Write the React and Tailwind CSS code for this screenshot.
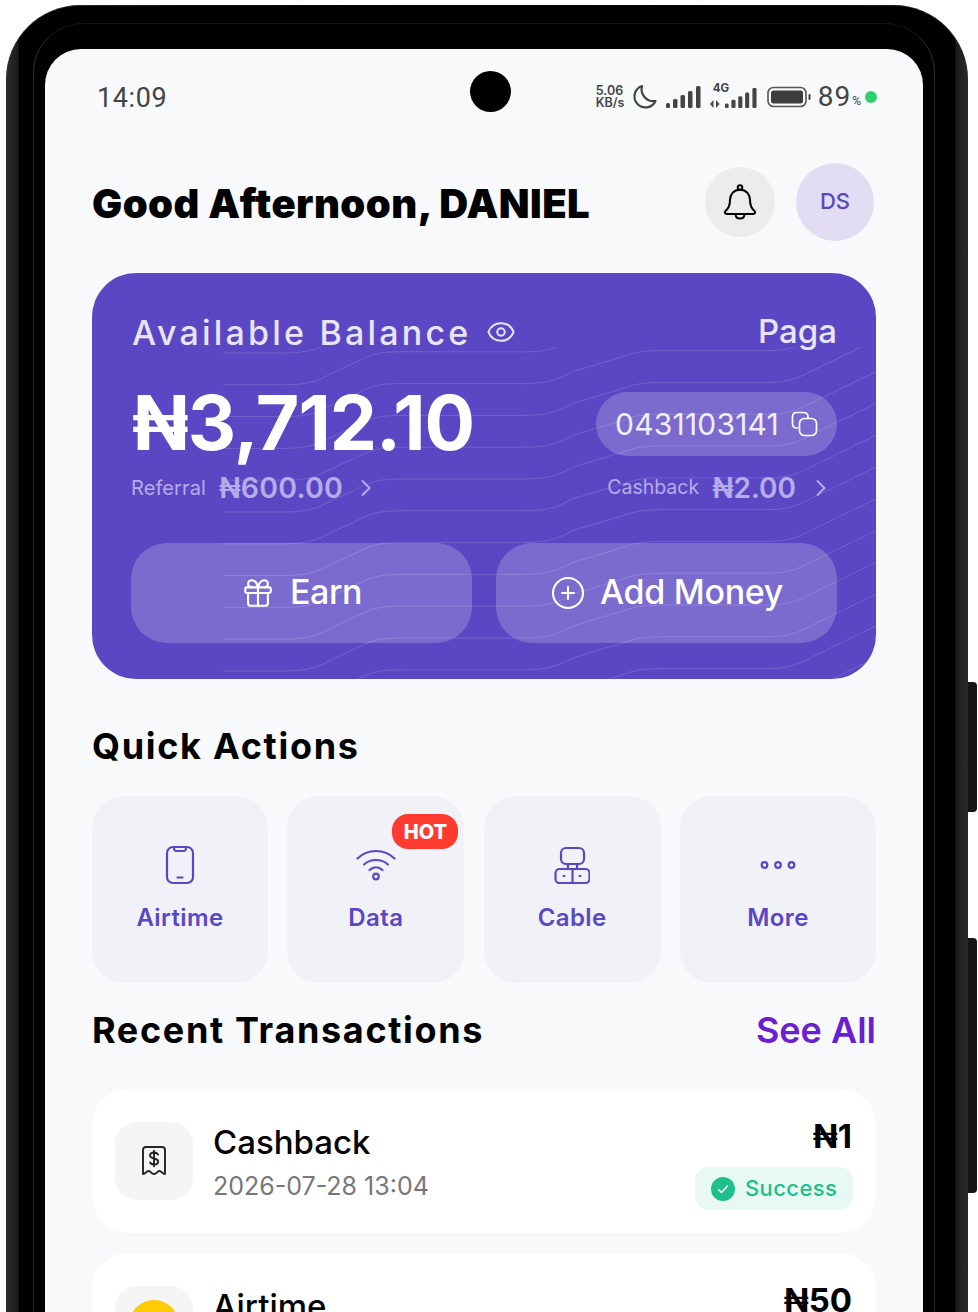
import { ChevronRight, CirclePlus, Eye, Gift } from "lucide-react";

const waveOffsets = Array.from({ length: 15 }, (_, i) => 6 + i * 31.8);

function Waves() {
  return (
    <svg
      className="absolute left-[131px] top-[74px] pointer-events-none"
      width="653"
      height="332"
      viewBox="0 0 653 332"
      fill="none"
    >
      {waveOffsets.map((y) => (
        <path
          key={y}
          d={`M0 ${y} H60 C85 ${y} 95 ${y - 4} 110 ${y - 12} L140 ${y - 26} C152 ${y - 32} 162 ${y - 33} 180 ${y - 33} H300 C325 ${y - 33} 335 ${y - 37} 350 ${y - 45} L400 ${y - 60} C412 ${y - 65} 425 ${y - 66} 440 ${y - 66} H545 C565 ${y - 66} 575 ${y - 70} 590 ${y - 78} L660 ${y - 112}`}
          stroke="white"
          strokeOpacity="0.15"
          strokeWidth="1"
        />
      ))}
    </svg>
  );
}

function SignalBars({ className = "" }) {
  return (
    <svg className={className} width="35" height="23" viewBox="0 0 35 23" fill="#444">
      <rect x="0" y="17" width="4" height="5" rx="1.5" />
      <rect x="7" y="13" width="4.5" height="9" rx="1.5" />
      <rect x="14.5" y="9" width="4.5" height="13" rx="1.5" />
      <rect x="22" y="5" width="4.5" height="17" rx="1.5" />
      <rect x="30" y="0" width="4.5" height="22" rx="1.5" />
    </svg>
  );
}

function StatusBar() {
  return (
    <div className="relative flex h-[96px] items-center justify-between pl-[5px] text-[#444]">
      <span className="pt-[3px] font-['Roboto',sans-serif] text-[27px] tracking-[0.6px]">14:09</span>
      <div className="absolute left-[378px] top-[22px] h-[41px] w-[41px] rounded-full bg-black" />
      <div className="mr-[-1px] flex items-center">
        <div className="w-[30px] font-['Inter',sans-serif] text-[12.5px] font-semibold leading-[12.5px]">
          <div>5.06</div>
          <div>KB/s</div>
        </div>
        <svg className="ml-[5px]" width="26" height="26" viewBox="0 0 26 26" fill="none">
          <path
            d="M11 2 A11 11 0 1 0 24.5 17 A12 12 0 0 1 11 2 Z"
            stroke="#444"
            strokeWidth="2.2"
            strokeLinejoin="round"
          />
        </svg>
        <SignalBars className="ml-[9px]" />
        <div className="relative ml-[9px] h-[26px] w-[47px]">
          <span className="absolute left-[3px] top-[-4px] font-['Inter',sans-serif] text-[11.5px] font-bold">4G</span>
          <svg className="absolute bottom-[2px] left-0" width="10" height="8" viewBox="0 0 10 8" fill="#444">
            <path d="M0 4 L3.5 0 V8 Z" />
            <path d="M9.5 4 L6 0 V8 Z" />
          </svg>
          <SignalBars className="absolute bottom-0 right-0 w-[32px]" />
        </div>
        <svg className="ml-[10px]" width="44" height="22" viewBox="0 0 44 22" fill="none">
          <rect x="1" y="1.5" width="38" height="19" rx="5.5" stroke="#555" strokeWidth="1.6" />
          <rect x="4" y="4.5" width="32" height="13" rx="2.5" fill="#3d3d3d" />
          <rect x="41.5" y="8" width="2" height="6" rx="1" fill="#444" />
        </svg>
        <span className="ml-[7px] font-['Roboto',sans-serif] text-[28px] leading-none tracking-[1px]">89</span>
        <span className="ml-[1px] mt-[7px] font-['Roboto',sans-serif] text-[12px]">%</span>
        <span className="ml-[4px] h-[12px] w-[12px] rounded-full bg-[#2fd06b]" />
      </div>
    </div>
  );
}

function BellIcon() {
  return (
    <svg width="34" height="36" viewBox="0 0 34 36" fill="none" stroke="black" strokeWidth="2" strokeLinecap="round" strokeLinejoin="round">
      <circle cx="17" cy="3.5" r="2.3" />
      <path d="M17 5.8 C10.5 5.8 7 10.5 7 16 C7 22 5.5 24.5 2.5 27 C1 28.5 2 30 4 30 H30 C32 30 33 28.5 31.5 27 C28.5 24.5 27 22 27 16 C27 10.5 23.5 5.8 17 5.8 Z" />
      <path d="M12.5 30 C12.5 33 14.5 34.5 17 34.5 C19.5 34.5 21.5 33 21.5 30" />
    </svg>
  );
}

function Header() {
  return (
    <div className="mt-[18px] flex h-[78px] items-center">
      <h1 className="pt-[3px] font-['Inter',sans-serif] text-[40px] font-black leading-none tracking-[0.45px] text-black">
        Good Afternoon, DANIEL
      </h1>
      <div className="ml-auto flex h-[70px] w-[70px] items-center justify-center rounded-full bg-[#ebecee]">
        <BellIcon />
      </div>
      <div className="ml-[21px] mr-[2px] flex h-[78px] w-[78px] items-center justify-center rounded-full bg-[#e2ddf3] pb-[2px] font-['Inter',sans-serif] text-[22px] font-medium text-[#5b47c4]">
        DS
      </div>
    </div>
  );
}

function CopyIcon() {
  return (
    <svg width="27" height="26" viewBox="0 0 27 26" fill="none" stroke="currentColor" strokeWidth="1.7" strokeLinejoin="round">
      <path d="M7 17 H6 C3 17 1.5 15.5 1.5 12.5 V6 C1.5 3 3 1.5 6 1.5 H12.5 C15.5 1.5 17 3 17 6 V7" />
      <rect x="8.5" y="7.5" width="17" height="17" rx="5" />
    </svg>
  );
}

function BalanceCard() {
  return (
    <div className="relative mt-[32px] h-[406px] overflow-hidden rounded-[44px] bg-[#5b47c4] px-[39px] pt-[39px] font-['Inter',sans-serif]">
      <Waves />
      <div className="relative">
        <div className="flex h-[40px] items-center justify-between pl-[1px] text-[#e9e5f8]">
          <div className="flex items-center">
            <span className="text-[34px] font-medium tracking-[3.2px]">Available Balance</span>
            <Eye size={30} strokeWidth={1.6} className="ml-[15px]" />
          </div>
          <span className="text-[33px] font-medium">Paga</span>
        </div>

        <div className="mt-[30px] flex h-[80px] items-center justify-between pl-[1px]">
          <span className="text-[75px] font-bold leading-none tracking-[-1px] text-white">₦3,712.10</span>
          <div className="mt-[4px] flex h-[64px] w-[241px] items-center justify-center gap-[12px] rounded-full bg-white/20 text-white">
            <span className="text-[30px] tracking-[0.2px] text-[#f1eefb]">0431103141</span>
            <CopyIcon />
          </div>
        </div>

        <div className="mt-[11px] flex h-[30px] items-center justify-between text-[#b6acea]">
          <div className="flex items-center">
            <span className="text-[20px] tracking-[0.1px]">Referral</span>
            <span className="ml-[13px] text-[28.5px] font-semibold tracking-[0.2px]">₦600.00</span>
            <ChevronRight size={28} strokeWidth={1.6} className="ml-[9px]" />
          </div>
          <div className="flex items-center pr-[2px]">
            <span className="text-[19.5px]">Cashback</span>
            <span className="ml-[13px] text-[28px] font-semibold">₦2.00</span>
            <ChevronRight size={28} strokeWidth={1.6} className="ml-[11px]" />
          </div>
        </div>

        <div className="mt-[40px] grid grid-cols-2 gap-[24px]">
          <button className="flex h-[100px] items-center justify-center gap-[15px] rounded-[36px] bg-white/20 pb-[3px] text-[34px] font-medium tracking-[-0.4px] text-white">
            <Gift size={34} strokeWidth={1.5} className="mt-[3px]" />
            Earn
          </button>
          <button className="flex h-[100px] items-center justify-center gap-[14px] rounded-[36px] bg-white/20 pb-[3px] text-[34px] font-medium tracking-[-0.3px] text-white">
            <CirclePlus size={36} strokeWidth={1.4} className="mt-[3px]" />
            Add Money
          </button>
        </div>
      </div>
    </div>
  );
}

function PhoneIcon() {
  return (
    <svg width="30" height="40" viewBox="0 0 30 40" fill="none" stroke="currentColor" strokeWidth="2.2" strokeLinecap="round" strokeLinejoin="round">
      <rect x="2" y="2" width="26" height="36" rx="6" />
      <path d="M9 2 C9 6 10 6 12 6 H18 C20 6 21 6 21 2" />
      <path d="M12.5 32.5 H17.5" />
    </svg>
  );
}

function WifiIcon() {
  return (
    <svg width="40" height="32" viewBox="0 0 40 32" fill="none" stroke="currentColor" strokeWidth="2.2" strokeLinecap="round">
      <path d="M1.5 9.5 C11.5 -0.5 28.5 -0.5 38.5 9.5" />
      <path d="M8 15.5 C14.5 9.5 25.5 9.5 32 15.5" />
      <path d="M13.5 21 C17.5 17.5 22.5 17.5 26.5 21" />
      <circle cx="20" cy="27.5" r="2.8" />
    </svg>
  );
}

function CableIcon() {
  return (
    <svg width="36" height="38" viewBox="0 0 36 38" fill="none" stroke="currentColor" strokeWidth="2.2" strokeLinecap="round" strokeLinejoin="round">
      <rect x="7" y="2" width="23" height="16" rx="5" />
      <path d="M14 18 V23 M23 18 V23" />
      <rect x="1.5" y="23" width="34" height="14" rx="4" />
      <path d="M18.5 23 V37" />
      <path d="M9.5 30 H10.5 M25.5 30 H26.5" />
    </svg>
  );
}

function DotsIcon() {
  return (
    <svg width="36" height="10" viewBox="0 0 36 10" fill="none" stroke="currentColor" strokeWidth="2.2">
      <circle cx="4.5" cy="5" r="2.8" />
      <circle cx="18" cy="5" r="2.8" />
      <circle cx="31.5" cy="5" r="2.8" />
    </svg>
  );
}

function ActionTile({ label, hot, children }) {
  return (
    <div className="relative flex h-[187px] flex-col items-center rounded-[32px] bg-[#f1f2f7] text-[#5b47c4]">
      <div className="mt-[48px] flex h-[42px] items-center justify-center">{children}</div>
      <span className="mt-[16px] text-[24px] font-semibold leading-[32px] tracking-[0.4px]">{label}</span>
      {hot && (
        <span className="absolute right-[6px] top-[18px] flex h-[35px] w-[66px] items-center justify-center rounded-[16px] bg-[#ff3b30] text-[20px] font-extrabold text-white">
          HOT
        </span>
      )}
    </div>
  );
}

function QuickActions() {
  return (
    <div className="font-['Inter',sans-serif]">
      <h2 className="mt-[45px] text-[36px] font-bold leading-[44px] tracking-[1.7px] text-black">Quick Actions</h2>
      <div className="mt-[28px] grid grid-cols-[176px_177px_177px_196px] gap-[19.33px]">
        <ActionTile label="Airtime">
          <PhoneIcon />
        </ActionTile>
        <ActionTile label="Data" hot>
          <WifiIcon />
        </ActionTile>
        <ActionTile label="Cable">
          <CableIcon />
        </ActionTile>
        <ActionTile label="More">
          <DotsIcon />
        </ActionTile>
      </div>
    </div>
  );
}

function ReceiptIcon() {
  return (
    <svg width="26" height="30" viewBox="0 0 26 30" fill="none" stroke="#222" strokeWidth="1.9" strokeLinecap="round" strokeLinejoin="round">
      <path d="M2 4 C2 2 3 1 5 1 H21 C23 1 24 2 24 4 V28 C21 28 21 25 18.5 25 C16 25 16 28 13 28 C10 28 10 25 7.5 25 C5 25 5 28 2 28 Z" />
      <path d="M17 8.5 C16 7 15 6.5 13 6.5 C10.5 6.5 9 7.5 9 9.5 C9 13.5 17.2 11.5 17.2 15.5 C17.2 17.5 15.5 18.5 13 18.5 C11 18.5 9.8 18 9 16.5 M13 4.8 V20.2" />
    </svg>
  );
}

function RecentTransactions() {
  return (
    <div className="font-['Inter',sans-serif]">
      <div className="mt-[25px] flex h-[44px] items-center justify-between">
        <h2 className="text-[36px] font-bold tracking-[1.65px] text-black">Recent Transactions</h2>
        <span className="text-[36px] font-semibold text-[#6a1fd0]">See All</span>
      </div>

      <div className="mt-[37px] flex h-[144px] items-start rounded-[36px] bg-white pl-[23px] pr-[23px] pt-[33px]">
        <div className="flex h-[78px] w-[78px] items-center justify-center rounded-[22px] bg-[#f5f5f5]">
          <ReceiptIcon />
        </div>
        <div className="ml-[20px]">
          <div className="text-[33px] font-medium leading-[40px] text-black">Cashback</div>
          <div className="mt-[8px] text-[25px] leading-[32px] text-[#777]">2026-07-28 13:04</div>
        </div>
        <div className="ml-auto mt-[-6px] flex flex-col items-end">
          <span className="mr-[1px] text-[33px] font-bold leading-[40px] text-black">₦1</span>
          <div className="mt-[11px] flex h-[43px] w-[158px] items-center gap-[10px] rounded-[14px] bg-[#e8f8f2] pl-[16px] text-[22px] font-medium tracking-[0.4px] text-[#1dbf8a]">
            <svg width="24" height="24" viewBox="0 0 24 24">
              <circle cx="12" cy="12" r="12" fill="#1dbf8a" />
              <path d="M7.5 12.5 L10.5 15.5 L16.5 9" fill="none" stroke="white" strokeWidth="1.5" strokeLinecap="round" strokeLinejoin="round" />
            </svg>
            Success
          </div>
        </div>
      </div>

      <div className="mt-[20px] flex h-[144px] items-start rounded-[36px] bg-white pl-[23px] pr-[23px] pt-[33px]">
        <div className="flex h-[78px] w-[78px] items-center justify-center rounded-[22px] bg-[#f5f5f5]">
          <span className="h-[50px] w-[50px] rounded-full bg-[#ffcb05]" />
        </div>
        <div className="ml-[20px]">
          <div className="text-[33px] font-medium leading-[40px] text-black">Airtime</div>
        </div>
        <div className="ml-auto mt-[-6px]">
          <span className="mr-[1px] text-[33px] font-bold leading-[40px] text-black">₦50</span>
        </div>
      </div>
    </div>
  );
}

export default function App() {
  return (
    <div className="relative h-[1312px] w-[978px] overflow-hidden bg-white">
      <div className="absolute left-[963px] top-[682px] h-[130px] w-[14px] rounded-r-[4px] bg-[#161616]" />
      <div className="absolute left-[963px] top-[938px] h-[255px] w-[14px] rounded-r-[4px] bg-[#161616]" />

      <div className="relative ml-[6px] mt-[5px] h-[1400px] w-[962px] rounded-t-[74px] bg-gradient-to-r from-[#303030] via-black to-[#262626] px-[1px] pt-[1px]">
        <div className="h-full rounded-t-[73px] bg-[linear-gradient(90deg,#2a2a2a_0px,#1c1c1c_11px,#000_12px,#000_948px,#1c1c1c_949px,#2a2a2a_960px)] pl-[26px] pr-[32px] pt-[17px]">
          <div className="h-full rounded-t-[50px] border-x border-t border-x-[#2b2b2b] border-t-[#141414] bg-black px-[11px] pt-[25px]">
            <div className="h-full overflow-hidden rounded-t-[36px] bg-[#f8f9fb] px-[47px]">
              <StatusBar />
              <Header />
              <BalanceCard />
              <QuickActions />
              <RecentTransactions />
            </div>
          </div>
        </div>
      </div>
    </div>
  );
}
